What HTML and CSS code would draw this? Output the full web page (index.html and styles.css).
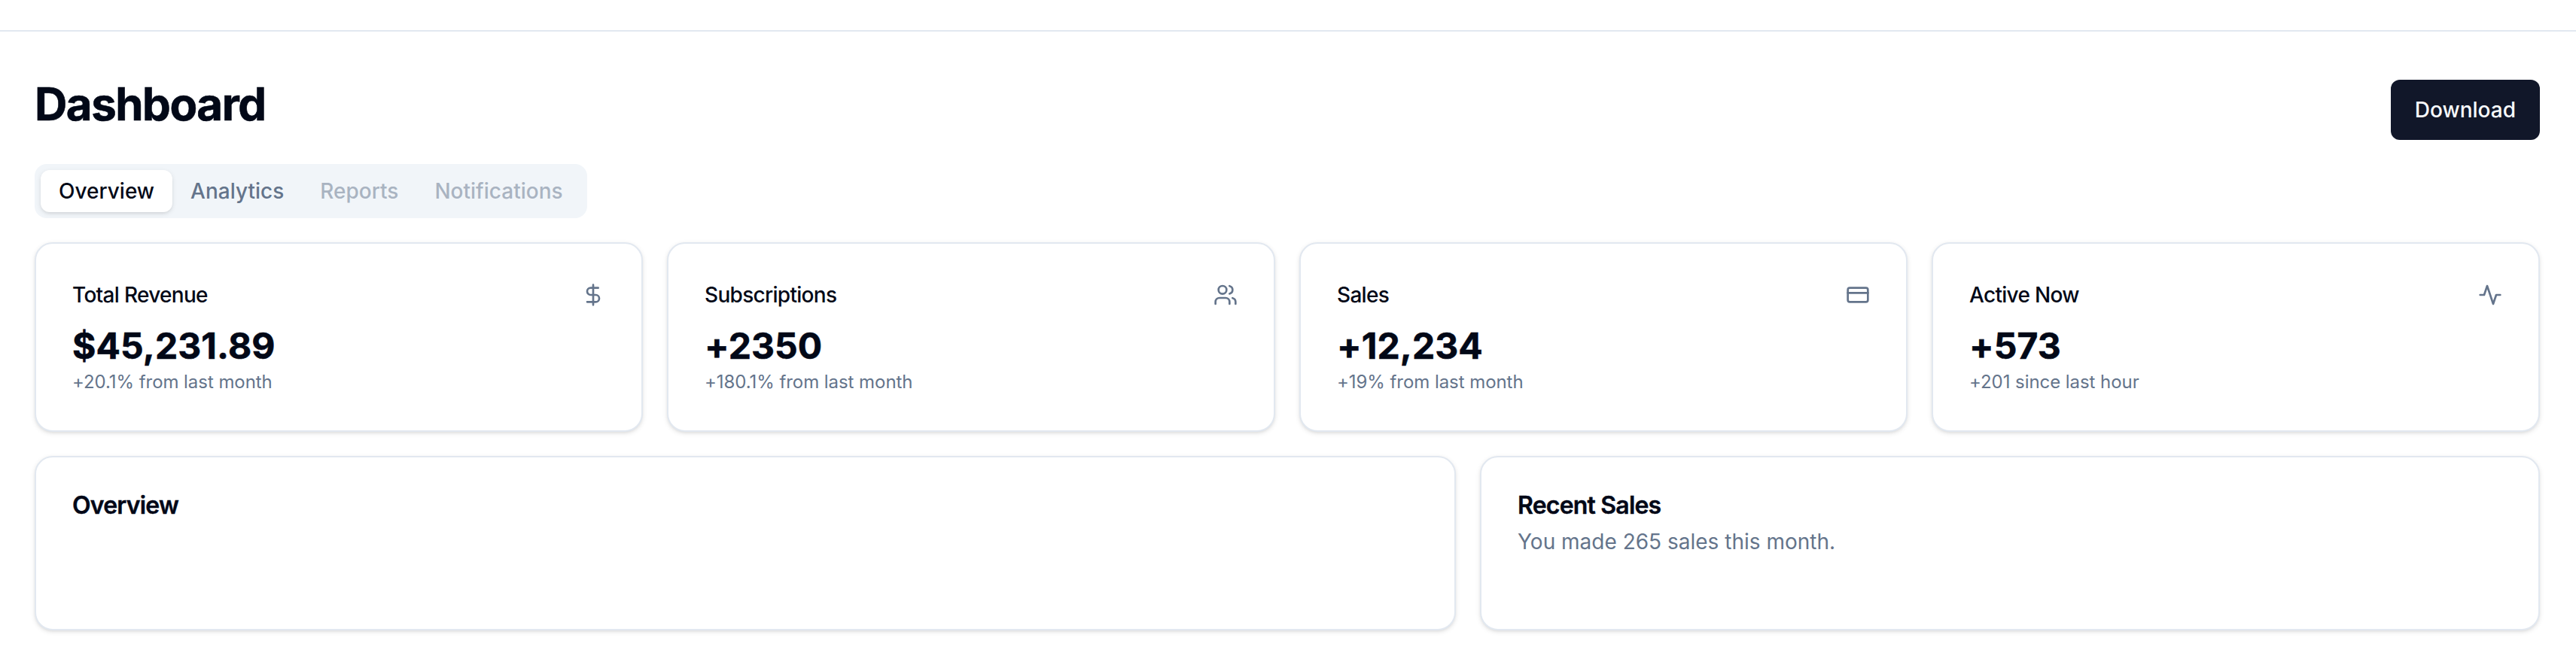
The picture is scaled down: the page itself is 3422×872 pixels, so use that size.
FILE: index.html
```html
<!DOCTYPE html>
<html lang="en">
<head>
<meta charset="utf-8">
<title>Dashboard</title>
<link rel="stylesheet" href="styles.css">
</head>
<body>
<header class="topbar"></header>
<main class="content">
  <div class="heading">
    <h2 class="heading-title">Dashboard</h2>
    <button class="button" type="button">Download</button>
  </div>
  <div class="tabs" role="tablist">
    <button class="tab tab-active" type="button" role="tab">Overview</button>
    <button class="tab" type="button" role="tab">Analytics</button>
    <button class="tab tab-disabled" type="button" role="tab">Reports</button>
    <button class="tab tab-disabled" type="button" role="tab">Notifications</button>
  </div>
  <section class="stats">
    <article class="card">
      <div class="stat-header">
        <h3 class="stat-title">Total Revenue</h3>
        <svg class="icon" viewBox="0 0 24 24"><path d="M12 2v20M17 5H9.5a3.5 3.5 0 0 0 0 7h5a3.5 3.5 0 0 1 0 7H6"/></svg>
      </div>
      <div class="stat-value">$45,231.89</div>
      <p class="stat-note">+20.1% from last month</p>
    </article>
    <article class="card">
      <div class="stat-header">
        <h3 class="stat-title">Subscriptions</h3>
        <svg class="icon" viewBox="0 0 24 24"><path d="M16 21v-2a4 4 0 0 0-4-4H6a4 4 0 0 0-4 4v2"/><circle cx="9" cy="7" r="4"/><path d="M22 21v-2a4 4 0 0 0-3-3.87M16 3.13a4 4 0 0 1 0 7.75"/></svg>
      </div>
      <div class="stat-value">+2350</div>
      <p class="stat-note">+180.1% from last month</p>
    </article>
    <article class="card">
      <div class="stat-header">
        <h3 class="stat-title">Sales</h3>
        <svg class="icon" viewBox="0 0 24 24"><rect width="20" height="14" x="2" y="5" rx="2"/><path d="M2 10h20"/></svg>
      </div>
      <div class="stat-value">+12,234</div>
      <p class="stat-note">+19% from last month</p>
    </article>
    <article class="card">
      <div class="stat-header">
        <h3 class="stat-title">Active Now</h3>
        <svg class="icon" viewBox="0 0 24 24"><path d="M22 12h-4l-3 9L9 3l-3 9H2"/></svg>
      </div>
      <div class="stat-value">+573</div>
      <p class="stat-note">+201 since last hour</p>
    </article>
  </section>
  <section class="panels">
    <article class="card panel-wide">
      <h3 class="panel-title">Overview</h3>
    </article>
    <article class="card panel-narrow">
      <h3 class="panel-title">Recent Sales</h3>
      <p class="panel-text">You made 265 sales this month.</p>
    </article>
  </section>
</main>
</body>
</html>
```
FILE: styles.css
```css
* {
  box-sizing: border-box;
  margin: 0;
}

body {
  background: #fff;
  color: #020817;
  font-family: Inter, "Liberation Sans", sans-serif;
  font-size: 28px;
  line-height: 40px;
  font-optical-sizing: none;
  font-variation-settings: "opsz" 14;
}

button {
  border: 0;
  font: inherit;
  font-variation-settings: inherit;
  font-weight: 500;
  white-space: nowrap;
}

.topbar {
  height: 42px;
  border-bottom: 2px solid #e2e8f0;
}

.content {
  display: flex;
  flex-direction: column;
  gap: 32px;
  padding: 64px 48px 32px 46px;
}

.heading {
  display: flex;
  justify-content: space-between;
  align-items: flex-start;
  height: 80px;
}

.heading-title {
  margin-top: -4px;
  font-size: 60px;
  line-height: 72px;
  font-weight: 700;
  letter-spacing: -0.025em;
  -webkit-text-stroke: 0.6px currentColor;
}

.button {
  height: 80px;
  padding: 0 32px;
  border-radius: 12px;
  background: #111729;
  color: #f8fafc;
}

.tabs {
  display: flex;
  align-self: flex-start;
  height: 72px;
  padding: 8px;
  border-radius: 16px;
  background: #f1f5f9;
}

.tab {
  padding: 8px 24px;
  border-radius: 12px;
  background: transparent;
  color: #64748b;
}

.tab-active {
  background: #fff;
  color: #020817;
  box-shadow: 0 2px 6px rgba(0, 0, 0, 0.1), 0 2px 4px -2px rgba(0, 0, 0, 0.1);
}

.tab-disabled {
  opacity: 0.5;
}

.stats {
  display: grid;
  grid-template-columns: repeat(4, 1fr);
  gap: 32px;
}

.card {
  padding: 48px;
  border: 2px solid #e2e8f0;
  border-radius: 24px;
  background: #fff;
  box-shadow: 0 2px 6px rgba(0, 0, 0, 0.1), 0 2px 4px -2px rgba(0, 0, 0, 0.1);
}

.stat-header {
  display: flex;
  align-items: center;
  justify-content: space-between;
  padding-bottom: 16px;
}

.stat-title {
  font-size: 28px;
  font-weight: 500;
  letter-spacing: -0.025em;
}

.icon {
  width: 32px;
  height: 32px;
  fill: none;
  stroke: #64748b;
  stroke-width: 2;
  stroke-linecap: round;
  stroke-linejoin: round;
}

.stat-value {
  font-size: 48px;
  line-height: 64px;
  font-weight: 700;
  letter-spacing: 0.1px;
  -webkit-text-stroke: 0.6px currentColor;
}

.stat-note {
  color: #64748b;
  font-size: 24px;
  line-height: 32px;
  letter-spacing: -0.06px;
}

.panels {
  display: grid;
  grid-template-columns: repeat(7, 1fr);
  gap: 32px;
}

.panels .card {
  height: 232px;
}

.panel-wide {
  grid-column: span 4;
}

.panel-narrow {
  grid-column: span 3;
}

.panel-title {
  font-size: 32px;
  line-height: 32px;
  font-weight: 600;
  letter-spacing: -0.025em;
  -webkit-text-stroke: 0.4px currentColor;
}

.panel-text {
  margin-top: 12px;
  color: #64748b;
}
```
